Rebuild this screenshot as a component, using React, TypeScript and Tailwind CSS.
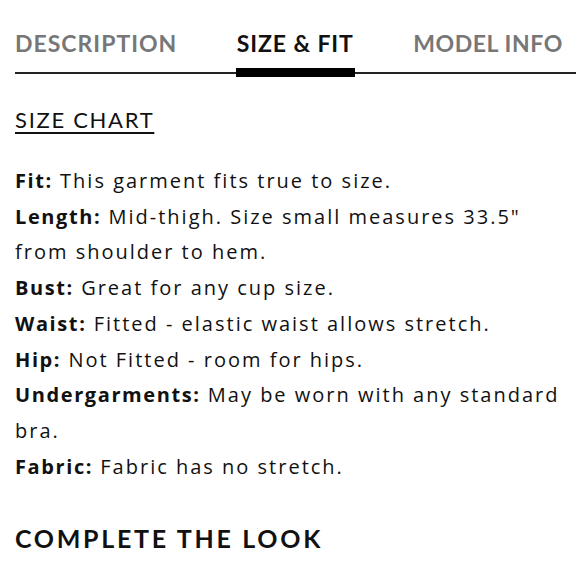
import React from "react";

const rows: { label: string; text: string }[] = [
  { label: "Fit:", text: "This garment fits true to size." },
  { label: "Length:", text: 'Mid-thigh. Size small measures 33.5" from shoulder to hem.' },
  { label: "Bust:", text: "Great for any cup size." },
  { label: "Waist:", text: "Fitted - elastic waist allows stretch." },
  { label: "Hip:", text: "Not Fitted - room for hips." },
  { label: "Undergarments:", text: "May be worn with any standard bra." },
  { label: "Fabric:", text: "Fabric has no stretch." },
];

export default function App() {
  return (
    <div
      className="w-[580px] h-[579px] bg-white overflow-hidden text-[#111]"
      style={{ fontFamily: "Lato, 'Noto Sans', sans-serif" }}
    >
      <div className="ml-[15px] mr-[4px] pt-[28px]">
        <div className="relative">
          <div className="flex justify-between pr-[13px]">
            <div className="text-[23px] leading-[30px] font-bold tracking-[1px] text-[#777]">DESCRIPTION</div>
            <div className="relative text-[23px] leading-[30px] font-bold tracking-[0.9px] text-[#111]">
              SIZE &amp; FIT
              <div className="absolute left-[-1px] right-[-1px] top-[40px] h-[9px] bg-black" />
            </div>
            <div className="text-[23px] leading-[30px] font-bold tracking-[0.6px] text-[#777]">MODEL INFO</div>
          </div>
          <div className="mt-[14px] h-[2px] bg-[#222]" />
        </div>

        <div className="mt-[31px]">
          <span className="text-[22px] leading-[30px] underline underline-offset-[4px] decoration-[2px] tracking-[1.7px]">
            SIZE CHART
          </span>
        </div>

        <div
          className="mt-[28px] text-[20px] leading-[35.7px] tracking-[2px] pr-[8px]"
          style={{ fontFamily: "'Open Sans', 'Noto Sans', sans-serif" }}
        >
          {rows.map((r) => (
            <div key={r.label}>
              <span className="font-bold tracking-[1.6px]">{r.label}</span> {r.text}
            </div>
          ))}
        </div>

        <div className="mt-[38px] text-[25px] leading-[32px] font-bold tracking-[2.7px]">COMPLETE THE LOOK</div>
      </div>
    </div>
  );
}
